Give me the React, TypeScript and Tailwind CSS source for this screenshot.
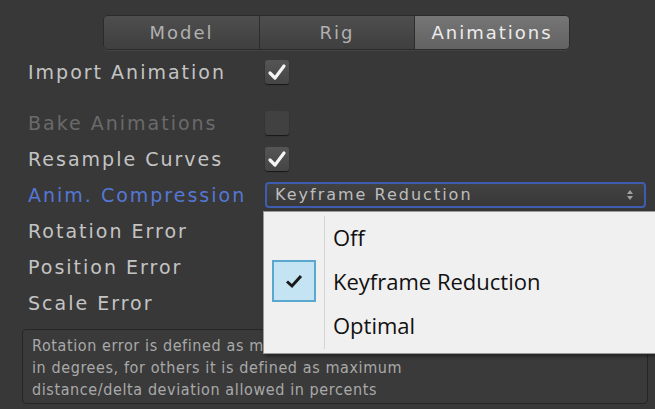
import React from 'react';

const ui = { fontFamily: '"DejaVu Sans", "Liberation Sans", sans-serif' };
const helpFont = { fontFamily: '"DejaVu Sans Condensed", "DejaVu Sans", sans-serif' };
const menuFont = { fontFamily: '"Open Sans", "Noto Sans", sans-serif' };

const Check: React.FC<{ on?: boolean; disabled?: boolean }> = ({ on, disabled }) => (
  <div
    className={`w-[24px] h-[24px] rounded-[3px] flex items-center justify-center shadow-[0_1px_1px_rgba(0,0,0,0.6)] ${
      disabled ? 'bg-[#414141]' : 'bg-gradient-to-b from-[#555555] to-[#454545]'
    }`}
  >
    {on && (
      <svg width="20" height="18" viewBox="0 0 20 18">
        <path d="M3 10 L8 15 L17 3" fill="none" stroke="#f4f4f4" strokeWidth="3.2" strokeLinecap="round" strokeLinejoin="round" />
      </svg>
    )}
  </div>
);

const Row: React.FC<{ label: string; tone?: string; children?: React.ReactNode }> = ({ label, tone = 'text-[#c4c4c4]', children }) => (
  <div className="h-[36px] flex items-center pl-[28px]">
    <div className={`w-[237px] text-[19px] tracking-[2px] whitespace-nowrap ${tone}`}>{label}</div>
    {children}
  </div>
);

export default function App() {
  const tabs = ['Model', 'Rig', 'Animations'];
  return (
    <div className="w-[655px] h-[409px] bg-[#383838] relative overflow-hidden" style={ui}>
      <div className="pt-[15px] pl-[103px] flex">
        <div className="flex rounded-[5px] overflow-hidden border border-[#2b2b2b] shadow-[0_1px_0_rgba(255,255,255,0.06)]">
          {tabs.map((t, i) => {
            const active = i === 2;
            return (
              <div
                key={t}
                className={`w-[155px] h-[33px] flex items-center justify-center text-[18px] tracking-[2px] ${
                  i > 0 ? 'border-l border-[#2d2d2d]' : ''
                } ${
                  active
                    ? 'bg-gradient-to-b from-[#767676] to-[#626262] text-[#ececec]'
                    : 'bg-gradient-to-b from-[#4e4e4e] to-[#3f3f3f] text-[#b0b0b0]'
                }`}
              >
                {t}
              </div>
            );
          })}
        </div>
      </div>

      <div className="pt-[4px]">
        <Row label="Import Animation">
          <Check on />
        </Row>
        <div className="h-[15px]" />
        <Row label="Bake Animations" tone="text-[#6a6a6a]">
          <Check disabled />
        </Row>
        <Row label="Resample Curves">
          <Check on />
        </Row>
        <Row label="Anim. Compression" tone="text-[#5577d6]">
          <div className="w-[381px] h-[26px] rounded-[4px] border-2 border-[#3e5cb0] bg-gradient-to-b from-[#424242] to-[#383838] flex items-center pl-[8px] pr-[10px]">
            <span className="flex-1 text-[16px] tracking-[2px] text-[#bdbdbd] whitespace-nowrap">Keyframe Reduction</span>
            <svg width="8" height="12" viewBox="0 0 8 12">
              <path d="M4 1 L7 5 L1 5 Z M4 11 L7 7 L1 7 Z" fill="#a0a0a0" />
            </svg>
          </div>
        </Row>
        <Row label="Rotation Error" />
        <Row label="Position Error" />
        <Row label="Scale Error" />

        <div
          className="mt-[8px] ml-[22px] w-[626px] h-[75px] rounded-[4px] border border-[#262626] bg-[#3a3a3a] px-[9px] pt-[5px] text-[16px] leading-[22px] tracking-[0.6px] text-[#a9a9a9]"
          style={helpFont}
        >
          <div>Rotation error is defined as maximum angle deviation allowed</div>
          <div>in degrees, for others it is defined as maximum</div>
          <div>distance/delta deviation allowed in percents</div>
        </div>
      </div>

      <div
        className="absolute left-[263px] top-[211px] w-[400px] h-[143px] bg-[#f0f0f0] border border-[#9a9a9a] shadow-[2px_2px_4px_rgba(0,0,0,0.45)] pt-[3px]"
        style={menuFont}
      >
        <div className="absolute left-[60px] top-[4px] bottom-[4px] w-px bg-[#d4d4d4]" />
        {['Off', 'Keyframe Reduction', 'Optimal'].map((item, i) => (
          <div key={item} className="h-[44px] flex items-center relative">
            <div className="w-[60px] h-full flex items-center justify-center">
              {i === 1 && (
                <div className="w-[44px] h-[42px] bg-[#c4e3f3] border-2 border-[#5aa8cf] flex items-center justify-center">
                  <svg width="18" height="16" viewBox="0 0 18 16">
                    <path d="M2 8.5 L7 13 L16 3" fill="none" stroke="#1a1a1a" strokeWidth="3" strokeLinejoin="miter" />
                  </svg>
                </div>
              )}
            </div>
            <span className="pl-[9px] text-[22px] text-[#111] whitespace-nowrap">{item}</span>
          </div>
        ))}
      </div>
    </div>
  );
}
